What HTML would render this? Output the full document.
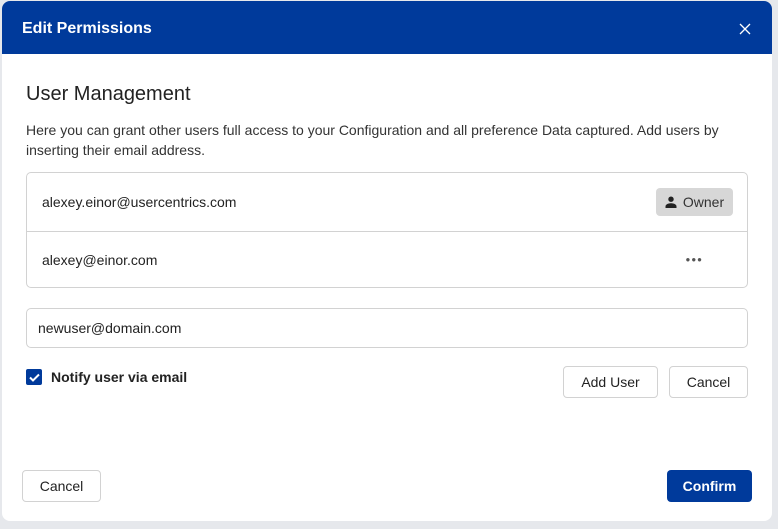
<!DOCTYPE html>
<html><head><meta charset="utf-8"><style>
*{box-sizing:border-box;margin:0;padding:0}
body{width:778px;height:529px;background:#e6e8ec;font-family:"Liberation Sans",Arial,sans-serif;color:#222;position:relative;overflow:hidden}
.modal{position:absolute;left:2px;top:1px;width:770px;height:520px;background:#fff;border-radius:8px;overflow:hidden}
.hdr{height:53px;background:#003a9b;color:#fff;font-weight:bold;font-size:16px;padding:2px 20px 0;display:flex;align-items:center;justify-content:space-between}
h2{position:absolute;left:24px;top:82px;font-size:20px;font-weight:normal;color:#222}
.desc{position:absolute;left:24px;top:119px;width:730px;font-size:14px;line-height:20px;color:#333}
.list{position:absolute;left:24px;top:171px;width:722px;height:116px;border:1px solid #d2d2d2;border-radius:5px}
.row{height:58px;display:flex;align-items:center;justify-content:space-between;padding:0 14px 0 15px;font-size:14px;color:#222}
.row+.row{border-top:1px solid #d2d2d2;height:56px}
.owner{background:#d7d7d7;border-radius:4px;height:28px;width:77px;display:flex;align-items:center;justify-content:center;gap:6px;font-size:14px;color:#333}
.dots{margin-right:30px;font-size:8px;letter-spacing:1px;color:#555}
.inp{position:absolute;left:24px;top:307px;width:722px;height:40px;border:1px solid #d2d2d2;border-radius:5px;font-size:14px;padding:0 11px;display:flex;align-items:center}
.chk{position:absolute;left:24px;top:368px;display:flex;align-items:center;font-weight:bold;font-size:14px;color:#222}
.cb{width:16px;height:16px;background:#003a9b;border-radius:2px;margin-right:9px;display:flex;align-items:center;justify-content:center}
.btn{position:absolute;border:1px solid #d2d2d2;border-radius:4px;background:#fff;font-size:14px;display:flex;align-items:center;justify-content:center;color:#222}
.prim{position:absolute;background:#003a9b;color:#fff;border-radius:4px;font-weight:bold;font-size:14px;display:flex;align-items:center;justify-content:center}
</style></head><body>
<div class="modal">
<div class="hdr"><span>Edit Permissions</span>
<svg width="14" height="14" viewBox="0 0 14 14"><path d="M2 2L12 12M12 2L2 12" stroke="#fff" stroke-width="1.3"/></svg></div>
<h2>User Management</h2>
<div class="desc">Here you can grant other users full access to your Configuration and all preference Data captured. Add users by inserting their email address.</div>
<div class="list">
<div class="row"><span>alexey.einor@usercentrics.com</span><div class="owner"><svg width="12" height="12" viewBox="0 0 12 12"><circle cx="6" cy="3.2" r="2.7" fill="#222"/><path d="M0.5 12V10.5C0.5 8.3 3.5 7.3 6 7.3S11.5 8.3 11.5 10.5V12Z" fill="#222"/></svg>Owner</div></div>
<div class="row"><span>alexey@einor.com</span><span class="dots">●●●</span></div>
</div>
<div class="inp">newuser@domain.com</div>
<div class="chk"><div class="cb"><svg width="11" height="9" viewBox="0 0 11 9"><path d="M1 4.5L4 7.5L10 1.5" stroke="#fff" stroke-width="2" fill="none"/></svg></div>Notify user via email</div>
<div class="btn" style="left:561px;top:365px;width:95px;height:32px">Add User</div>
<div class="btn" style="left:667px;top:365px;width:79px;height:32px">Cancel</div>
<div class="btn" style="left:20px;top:469px;width:79px;height:32px">Cancel</div>
<div class="prim" style="left:665px;top:469px;width:85px;height:32px">Confirm</div>
</div>
</body></html>
